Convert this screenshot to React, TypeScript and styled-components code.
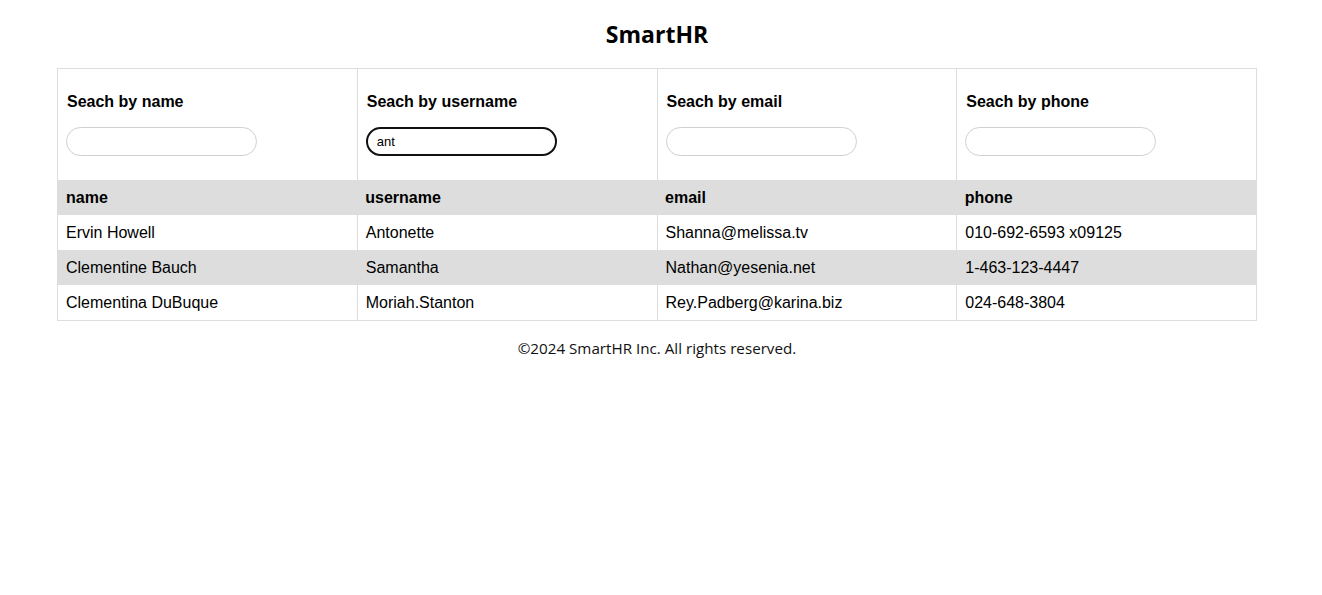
import * as React from 'react';
import styled, { createGlobalStyle } from 'styled-components';

const GlobalStyle = createGlobalStyle`
  body {
    margin: 0;
    background: #fff;
    color: #000;
  }
`;

const Page = styled.div`
  padding: 0 8px 0 0;
  display: flex;
  flex-direction: column;
  align-items: center;
`;

const Title = styled.h1`
  font-family: 'Open Sans', 'Noto Sans', sans-serif;
  font-size: 23px;
  font-weight: 700;
  margin: 17px 0 17px;
  line-height: 34px;
`;

const Table = styled.table`
  width: 1200px;
  border-collapse: collapse;
  border: 1px solid #dddddd;
  font-family: 'Liberation Sans', Arial, sans-serif;
  font-size: 16px;
`;

const FilterCell = styled.th`
  text-align: left;
  vertical-align: top;
  padding: 8px;
  border: 1px solid #dddddd;
  border-bottom: none;
`;

const FilterLabel = styled.label`
  display: block;
  font-weight: 700;
  line-height: 18px;
  margin: 16px 1px 0;
`;

const SearchInput = styled.input<{ $active?: boolean }>`
  display: block;
  box-sizing: border-box;
  width: 191px;
  height: 29px;
  margin: 16px 0 16px;
  padding: 0 9px;
  border-radius: 15px;
  border: ${(p) => (p.$active ? '2px solid #111' : '1px solid #d0d0d0')};
  font-family: 'Liberation Sans', Arial, sans-serif;
  font-size: 13px;
  outline: none;
  background: #fff;
`;

const HeadCell = styled.th`
  text-align: left;
  font-weight: 700;
  padding: 8px;
  line-height: 19px;
  background: #dddddd;
  border: none;
`;

const Row = styled.tr<{ $shaded?: boolean }>`
  background: ${(p) => (p.$shaded ? '#dddddd' : '#ffffff')};
`;

const Cell = styled.td`
  padding: 8px;
  line-height: 19px;
  border-left: 1px solid #dddddd;
  border-right: 1px solid #dddddd;
  width: 25%;
`;

const Footer = styled.p`
  font-family: 'Open Sans', 'Noto Sans', sans-serif;
  font-size: 15.2px;
  color: #111;
  margin: 17px 0 0;
  line-height: 20px;
`;

const filters = [
  { label: 'Seach by name', value: '' },
  { label: 'Seach by username', value: 'ant' },
  { label: 'Seach by email', value: '' },
  { label: 'Seach by phone', value: '' },
];

const users = [
  ['Ervin Howell', 'Antonette', 'Shanna@melissa.tv', '010-692-6593 x09125'],
  ['Clementine Bauch', 'Samantha', 'Nathan@yesenia.net', '1-463-123-4447'],
  ['Clementina DuBuque', 'Moriah.Stanton', 'Rey.Padberg@karina.biz', '024-648-3804'],
];

export default function App() {
  return (
    <Page>
      <GlobalStyle />
      <Title>SmartHR</Title>
      <Table>
        <thead>
          <tr>
            {filters.map((f) => (
              <FilterCell key={f.label}>
                <FilterLabel>{f.label}</FilterLabel>
                <SearchInput
                  type="text"
                  defaultValue={f.value}
                  $active={f.value !== ''}
                />
              </FilterCell>
            ))}
          </tr>
          <tr>
            <HeadCell>name</HeadCell>
            <HeadCell>username</HeadCell>
            <HeadCell>email</HeadCell>
            <HeadCell>phone</HeadCell>
          </tr>
        </thead>
        <tbody>
          {users.map((u, i) => (
            <Row key={u[1]} $shaded={i % 2 === 1}>
              {u.map((v) => (
                <Cell key={v}>{v}</Cell>
              ))}
            </Row>
          ))}
        </tbody>
      </Table>
      <Footer>©2024 SmartHR Inc. All rights reserved.</Footer>
    </Page>
  );
}
